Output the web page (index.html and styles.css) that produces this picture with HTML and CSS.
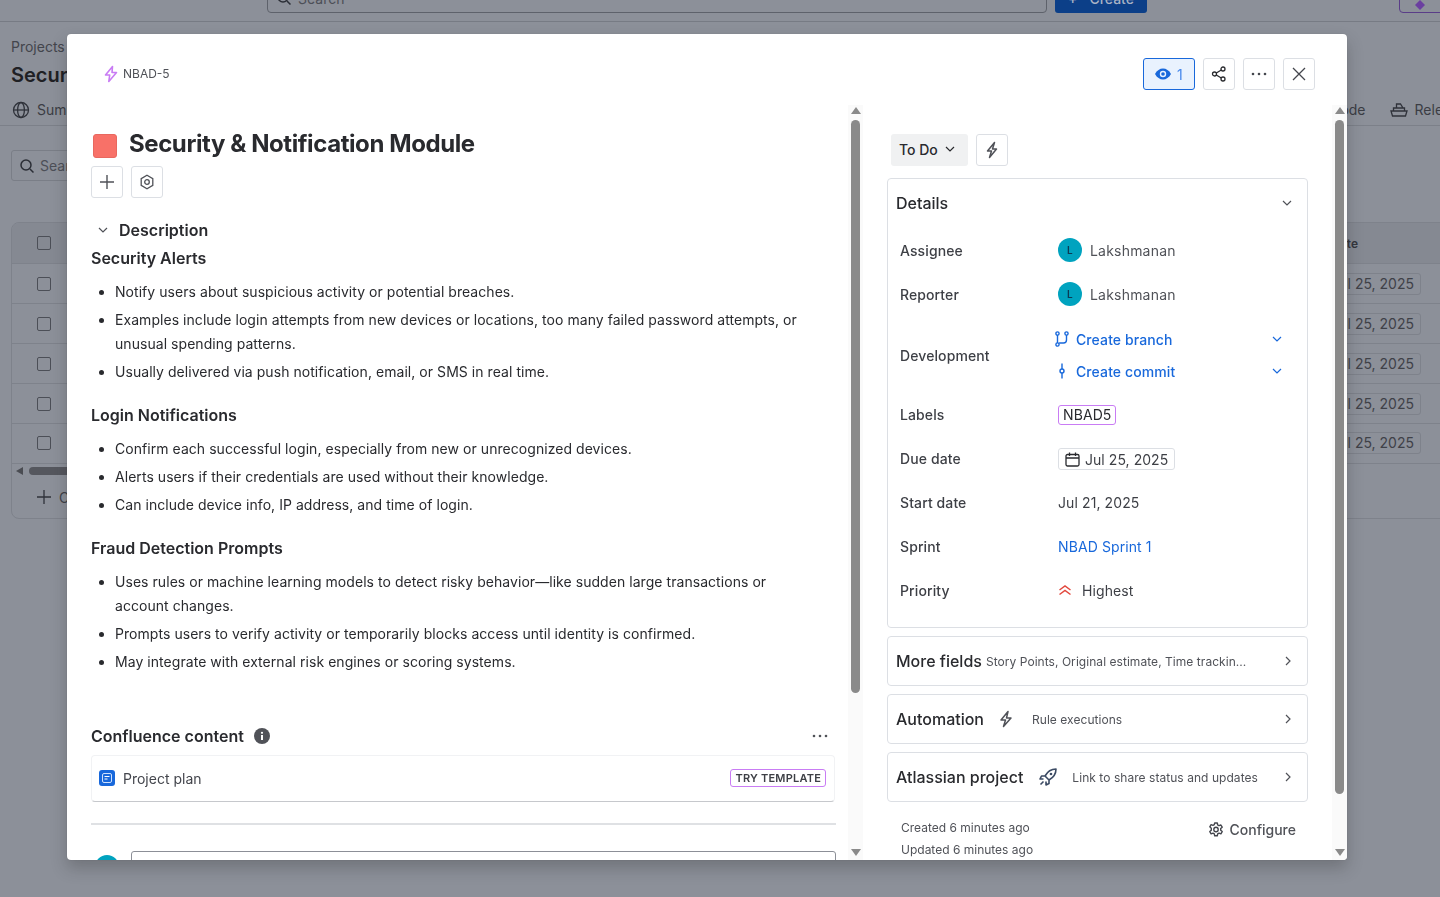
FILE: index.html
```html
<!DOCTYPE html>
<html>
<head>
    <title>Security &amp; Notification Module</title>
    <link rel="stylesheet" href="styles.css">
</head>
<body>
    <!-- Halaman di belakang dialog -->
    <div class="page">
        <div class="topbar">
            <div class="top-search"><svg width="16" height="16" viewBox="0 0 16 16"><circle cx="7" cy="7" r="5" class="ln"/><path d="M11 11l3.5 3.5" class="ln"/></svg>Search</div>
            <div class="top-create"><span class="top-plus">+</span> Create</div>
            <div class="top-upgrade"><svg width="12" height="12" viewBox="0 0 12 12"><path d="M6 1l5 5-5 5-5-5z" fill="#6b3fa0"/></svg></div>
        </div>
        <div class="crumb">Projects</div>
        <div class="page-title">Security &amp; Notification</div>
        <div class="tabs">
            <div class="tab"><svg width="18" height="18" viewBox="0 0 18 18"><circle cx="9" cy="9" r="7.5" class="ln2"/><ellipse cx="9" cy="9" rx="3.4" ry="7.5" class="ln2"/><path d="M1.5 9h15" class="ln2"/></svg>Summary</div>
            <div class="tab-end">
                <div class="tab">Code</div>
                <div class="tab"><svg width="18" height="15" viewBox="0 0 18 15"><path d="M1 9h16l-1.500 5h-13zM3.500 9V6h11v3M6.500 6V2h4l2.500 4" class="ln2"/></svg>Releases</div>
            </div>
        </div>
        <div class="filter"><svg width="16" height="16" viewBox="0 0 16 16"><circle cx="7" cy="7" r="5" class="ln"/><path d="M11 11l3.500 3.500" class="ln"/></svg>Search</div>
        <div class="table">
            <div class="tr tr-head"><span class="check"></span><span>Due date</span></div>
            <div class="tr"><span class="check"></span><span class="cell-date">Jul 25, 2025</span></div>
            <div class="tr"><span class="check"></span><span class="cell-date">Jul 25, 2025</span></div>
            <div class="tr"><span class="check"></span><span class="cell-date">Jul 25, 2025</span></div>
            <div class="tr"><span class="check"></span><span class="cell-date">Jul 25, 2025</span></div>
            <div class="tr tr-last"><span class="check"></span><span class="cell-date">Jul 25, 2025</span></div>
            <div class="hscroll"><span class="hscroll-arrow"></span><span class="hscroll-thumb"></span></div>
            <div class="add-row"><span class="add-plus"><svg width="14" height="14" viewBox="0 0 14 14"><path d="M7 0v14M0 7h14" class="ln2"/></svg></span>Create</div>
        </div>
    </div>

    <!-- Dialog -->
    <div class="modal">
        <div class="modal-head">
            <div class="issue-key">
                <svg width="16" height="18" viewBox="0 0 16 18"><path d="M9.500 1.500L2.500 10h4.200L5.800 16.500 13.500 7.500H9z" fill="none" stroke="#c97cf4" stroke-width="1.600" stroke-linejoin="round"/></svg>
                NBAD-5
            </div>
            <div class="head-actions">
                <button class="icon-btn watch"><svg width="18" height="14" viewBox="0 0 18 14"><path d="M1 7c2-3.600 4.800-5.500 8-5.500S15 3.400 17 7c-2 3.600-4.800 5.500-8 5.500S3 10.600 1 7z" fill="#1868db"/><circle cx="9" cy="7" r="3.200" fill="#e9f2fe"/><circle cx="9" cy="7" r="1.800" fill="#1868db"/></svg><span>1</span></button>
                <button class="icon-btn"><svg width="16" height="16" viewBox="0 0 16 16"><circle cx="3.500" cy="8" r="2" class="ln-d"/><circle cx="12" cy="3" r="2" class="ln-d"/><circle cx="12" cy="13" r="2" class="ln-d"/><path d="M5.300 7l5-3M5.300 9l5 3" class="ln-d"/></svg></button>
                <button class="icon-btn"><svg width="16" height="4" viewBox="0 0 16 4"><circle cx="2" cy="2" r="1.300" fill="#44464d"/><circle cx="8" cy="2" r="1.300" fill="#44464d"/><circle cx="14" cy="2" r="1.300" fill="#44464d"/></svg></button>
                <button class="icon-btn"><svg width="14" height="14" viewBox="0 0 14 14"><path d="M1 1l12 12M13 1L1 13" stroke="#44464d" stroke-width="1.300" fill="none"/></svg></button>
            </div>
        </div>

        <div class="modal-body">
            <div class="col-left">
                <div class="col-scroll">
                    <div class="title-row">
                        <span class="title-swatch"></span>
                        <h1>Security &amp; Notification Module</h1>
                    </div>
                    <div class="title-actions">
                        <button class="icon-btn"><svg width="14" height="14" viewBox="0 0 14 14"><path d="M7 0v14M0 7h14" stroke="#505258" stroke-width="1.400" fill="none"/></svg></button>
                        <button class="icon-btn"><svg width="16" height="16" viewBox="0 0 16 16"><path d="M8 1.300l5.800 3.300v6.800L8 14.700l-5.800-3.300V4.600z" fill="none" stroke="#505258" stroke-width="1.300"/><circle cx="8" cy="8" r="2.300" fill="none" stroke="#505258" stroke-width="1.300"/></svg></button>
                    </div>
                    <div class="desc-head">
                        <svg width="10" height="6" viewBox="0 0 10 6"><path d="M1 1l4 4 4-4" fill="none" stroke="#505258" stroke-width="1.200"/></svg>
                        <h2>Description</h2>
                    </div>
                    <h3 class="first">Security Alerts</h3>
                    <ul>
                        <li>Notify users about suspicious activity or potential breaches.</li>
                        <li>Examples include login attempts from new devices or locations, too many failed password attempts, or unusual spending patterns.</li>
                        <li>Usually delivered via push notification, email, or SMS in real time.</li>
                    </ul>
                    <h3>Login Notifications</h3>
                    <ul>
                        <li>Confirm each successful login, especially from new or unrecognized devices.</li>
                        <li>Alerts users if their credentials are used without their knowledge.</li>
                        <li>Can include device info, IP address, and time of login.</li>
                    </ul>
                    <h3>Fraud Detection Prompts</h3>
                    <ul>
                        <li>Uses rules or machine learning models to detect risky behavior—like sudden large transactions or account changes.</li>
                        <li>Prompts users to verify activity or temporarily blocks access until identity is confirmed.</li>
                        <li>May integrate with external risk engines or scoring systems.</li>
                    </ul>
                    <div class="conf-head">
                        <h3 class="conf-title">Confluence content</h3>
                        <svg width="16" height="16" viewBox="0 0 16 16"><circle cx="8" cy="8" r="8" fill="#505258"/><rect x="7" y="7" width="2" height="5" fill="#fff"/><circle cx="8" cy="4.800" r="1.100" fill="#fff"/></svg>
                        <svg class="conf-more" width="16" height="4" viewBox="0 0 16 4"><circle cx="2" cy="2" r="1.300" fill="#505258"/><circle cx="8" cy="2" r="1.300" fill="#505258"/><circle cx="14" cy="2" r="1.300" fill="#505258"/></svg>
                    </div>
                    <div class="conf-card">
                        <svg width="16" height="16" viewBox="0 0 16 16"><rect width="16" height="16" rx="3" fill="#1868db"/><rect x="3.500" y="3.500" width="9" height="9" rx="1.500" fill="none" stroke="#cfe1fd"/><path d="M5.500 6.500h5M5.500 9h3" stroke="#fff"/></svg>
                        <span class="conf-name">Project plan</span>
                        <span class="try">TRY TEMPLATE</span>
                    </div>
                    <div class="divider"></div>
                    <div class="comment-row">
                        <span class="avatar avatar-lg">L</span>
                        <div class="comment-box"></div>
                    </div>
                </div>
                <div class="sbar">
                    <span class="arrow-up"></span>
                    <span class="thumb thumb-left"></span>
                    <span class="arrow-down"></span>
                </div>
            </div>

            <div class="col-right">
                <div class="col-scroll-r">
                    <div class="status-row">
                        <button class="status">To Do <svg width="10" height="6" viewBox="0 0 10 6"><path d="M1 1l4 4 4-4" fill="none" stroke="#292a2e" stroke-width="1.200"/></svg></button>
                        <button class="icon-btn"><svg width="14" height="18" viewBox="0 0 14 18"><path d="M9.500 1.500L2.500 10h4l-2 6.500L11.500 8h-4z" fill="none" stroke="#505258" stroke-width="1.500" stroke-linejoin="round"/></svg></button>
                    </div>
                    <div class="panel details">
                        <div class="panel-head">
                            <span class="panel-title">Details</span>
                            <svg width="10" height="6" viewBox="0 0 10 6"><path d="M1 1l4 4 4-4" fill="none" stroke="#505258" stroke-width="1.200"/></svg>
                        </div>
                        <div class="row"><span class="row-label">Assignee</span><span class="person"><span class="avatar">L</span>Lakshmanan</span></div>
                        <div class="row"><span class="row-label">Reporter</span><span class="person"><span class="avatar">L</span>Lakshmanan</span></div>
                        <div class="row row-dev">
                            <span class="row-label">Development</span>
                            <div class="dev-links">
                                <div class="dev-link">
                                    <svg width="14" height="16" viewBox="0 0 14 16"><circle cx="2.500" cy="2.500" r="1.600" class="ln-b"/><circle cx="2.500" cy="13.500" r="1.600" class="ln-b"/><circle cx="11.500" cy="2.500" r="1.600" class="ln-b"/><path d="M2.500 4.100v7.800M11.500 4.100V9q0 3-3 3H4.100" class="ln-b"/></svg>
                                    <span>Create branch</span>
                                    <svg class="dev-chev" width="10" height="6" viewBox="0 0 10 6"><path d="M1 1l4 4 4-4" fill="none" stroke="#1868db" stroke-width="1.200"/></svg>
                                </div>
                                <div class="dev-link">
                                    <svg width="14" height="16" viewBox="0 0 14 16"><circle cx="7" cy="8" r="2" class="ln-b"/><path d="M7 0.500V6M7 10v5.500" class="ln-b"/></svg>
                                    <span>Create commit</span>
                                    <svg class="dev-chev" width="10" height="6" viewBox="0 0 10 6"><path d="M1 1l4 4 4-4" fill="none" stroke="#1868db" stroke-width="1.200"/></svg>
                                </div>
                            </div>
                        </div>
                        <div class="row"><span class="row-label">Labels</span><span class="label-tag">NBAD5</span></div>
                        <div class="row"><span class="row-label">Due date</span><span class="date-tag"><svg width="15" height="15" viewBox="0 0 15 15"><rect x="1" y="2.500" width="13" height="11.500" rx="1.500" fill="none" stroke="#292a2e" stroke-width="1.300"/><path d="M1 6h13M4.500 0.500v3.500M10.500 0.500v3.500" stroke="#292a2e" stroke-width="1.300"/></svg>Jul 25, 2025</span></div>
                        <div class="row"><span class="row-label">Start date</span><span>Jul 21, 2025</span></div>
                        <div class="row"><span class="row-label">Sprint</span><span class="link">NBAD Sprint 1</span></div>
                        <div class="row"><span class="row-label">Priority</span><span class="priority"><svg width="14" height="12" viewBox="0 0 14 12"><path d="M1.500 6L7 2l5.500 4M1.500 10.500L7 6.500l5.500 4" fill="none" stroke="#e2483d" stroke-width="1.500"/></svg>Highest</span></div>
                    </div>
                    <div class="panel fold">
                        <span class="panel-title">More fields</span>
                        <span class="fold-sub fold-sub-tight">Story Points, Original estimate, Time trackin...</span>
                        <svg class="fold-chev" width="6" height="10" viewBox="0 0 6 10"><path d="M1 1l4 4-4 4" fill="none" stroke="#505258" stroke-width="1.200"/></svg>
                    </div>
                    <div class="panel fold">
                        <span class="panel-title">Automation</span>
                        <svg class="fold-ic" width="16" height="18" viewBox="0 0 16 18"><path d="M10 1.500L3 10h4.500l-2 6.500L13 8H8.500z" fill="none" stroke="#505258" stroke-width="1.500" stroke-linejoin="round"/></svg>
                        <span class="fold-sub">Rule executions</span>
                        <svg class="fold-chev" width="6" height="10" viewBox="0 0 6 10"><path d="M1 1l4 4-4 4" fill="none" stroke="#505258" stroke-width="1.200"/></svg>
                    </div>
                    <div class="panel fold">
                        <span class="panel-title">Atlassian project</span>
                        <svg class="fold-ic fold-ic-wide" width="18" height="18" viewBox="0 0 18 18"><path d="M17 1C12 1 8.500 3.500 6 8l4 4c4.500-2.500 7-6 7-11zM6 8H2.500L1 11h3.500M10 12v3.500L7 17v-3.500M1.500 16.500L4.500 13.500" fill="none" stroke="#3b4a63" stroke-width="1.600" stroke-linejoin="round"/><circle cx="12" cy="6" r="1.300" fill="#3b4a63"/></svg>
                        <span class="fold-sub">Link to share status and updates</span>
                        <svg class="fold-chev" width="6" height="10" viewBox="0 0 6 10"><path d="M1 1l4 4-4 4" fill="none" stroke="#505258" stroke-width="1.200"/></svg>
                    </div>
                    <div class="meta">
                        <div class="meta-times">
                            <div>Created 6 minutes ago</div>
                            <div>Updated 6 minutes ago</div>
                        </div>
                        <div class="configure"><svg width="16" height="16" viewBox="0 0 16 16"><path d="M6.700 1h2.600l.4 2 1.300.7 1.900-.7 1.300 2.200-1.500 1.400v1.600l1.500 1.400-1.300 2.200-1.900-.7-1.300.7-.4 2H6.700l-.4-2-1.300-.7-1.900.7-1.300-2.200 1.500-1.400V6.200L1.800 4.800 3.100 2.600l1.900.7 1.300-.7z" fill="none" stroke="#44464d" stroke-width="1.400" stroke-linejoin="round"/><circle cx="8" cy="7.500" r="2.200" fill="none" stroke="#44464d" stroke-width="1.400"/></svg>Configure</div>
                    </div>
                </div>
                <div class="sbar">
                    <span class="arrow-up"></span>
                    <span class="thumb thumb-right"></span>
                    <span class="arrow-down"></span>
                </div>
            </div>
        </div>
    </div>
</body>
</html>
```

FILE: styles.css
```css
* {
    box-sizing: border-box;
}
html, body {
    height: 100%;
}
body {
    margin: 0;
    overflow: hidden;
    background-color: #8c9099;
    font-family: Inter, "Liberation Sans", sans-serif;
    font-size: 14px;
    color: #292a2e;
}
button {
    font-family: inherit;
    background: #fff;
    padding: 0;
    cursor: pointer;
}
h1, h2, h3, ul {
    margin: 0;
    padding: 0;
}
.ln {
    fill: none;
    stroke: #2b2e36;
    stroke-width: 1.500;
}
.ln2 {
    fill: none;
    stroke: #2f323a;
    stroke-width: 1.300;
}
.ln-d {
    fill: none;
    stroke: #292a2e;
    stroke-width: 1.300;
}
.ln-b {
    fill: none;
    stroke: #1868db;
    stroke-width: 1.400;
}

/* halaman belakang */
.page {
    height: 100%;
    color: #34363d;
}
.topbar {
    height: 22px;
    border-bottom: 1px solid #777b84;
    display: flex;
    align-items: flex-end;
    padding: 0 0 8px 267px;
}
.top-search {
    width: 780px;
    height: 30px;
    flex-shrink: 0;
    border: 1px solid #5e626b;
    border-radius: 4px;
    display: flex;
    align-items: center;
    gap: 6px;
    padding-left: 8px;
    color: #4c4f57;
}
.top-create {
    width: 92px;
    height: 30px;
    flex-shrink: 0;
    margin-left: 8px;
    background-color: #0c3f88;
    border-radius: 3px;
    display: flex;
    align-items: center;
    justify-content: center;
    color: #a9b3c4;
    font-weight: 500;
}
.top-plus {
    margin-right: 12px;
}
.top-upgrade {
    width: 60px;
    height: 30px;
    flex-shrink: 0;
    margin-left: 252px;
    border: 1px solid #5a3d88;
    border-radius: 4px;
    display: flex;
    align-items: center;
    padding: 14px 0 0 14px;
}
.crumb {
    margin: 16px 0 0 11px;
    line-height: 17px;
    color: #43454c;
}
.page-title {
    margin: 8px 0 0 11px;
    font-size: 20px;
    line-height: 24px;
    font-weight: 600;
    color: #1f2024;
}
.tabs {
    height: 28px;
    margin-top: 11px;
    border-bottom: 1px solid #7c8089;
    display: flex;
    justify-content: space-between;
    padding: 0 0 4px 12px;
    align-items: center;
}
.tab {
    display: flex;
    align-items: center;
    gap: 7px;
    color: #3b3d44;
}
.tab-end {
    display: flex;
    gap: 24px;
    margin-right: -34px;
}
.filter {
    width: 200px;
    height: 31px;
    margin: 24px 0 0 11px;
    border: 1px solid #7a7e87;
    border-radius: 3px;
    display: flex;
    align-items: center;
    gap: 5px;
    padding-left: 7px;
    color: #4c4f57;
}
.table {
    height: 297px;
    margin: 41px -12px 0 11px;
    border: 1px solid #7e828b;
    border-radius: 8px;
    overflow: hidden;
}
.tr {
    height: 40px;
    display: flex;
    align-items: center;
    justify-content: space-between;
    padding: 0 30px 0 25px;
    border-bottom: 1px solid #7e828b;
}
.tr-head {
    height: 41px;
    background-color: #858992;
    font-size: 12px;
    font-weight: 600;
    padding-right: 93px;
}
.tr-last {
    height: 39px;
    padding-bottom: 2px;
    border-bottom: 0;
}
.check {
    width: 14px;
    height: 14px;
    border: 1px solid #4c4f57;
    border-radius: 2px;
}
.cell-date {
    height: 22px;
    line-height: 20px;
    padding: 0 6px;
    border: 1px solid #7e828b;
    border-radius: 3px;
    color: #3f4148;
}
.hscroll {
    height: 14px;
    display: flex;
    align-items: center;
    gap: 6px;
    padding-left: 4px;
    border-top: 1px solid #7e828b;
}
.hscroll-arrow {
    border-style: solid;
    border-width: 4px 7px 4px 0;
    border-color: transparent #4a4c52 transparent transparent;
}
.hscroll-thumb {
    width: 120px;
    height: 8px;
    border-radius: 4px;
    background-color: #55575e;
}
.add-row {
    height: 40px;
    display: flex;
    align-items: center;
    gap: 8px;
    padding-left: 25px;
    color: #3f4148;
}
.add-plus {
    display: flex;
}

/* dialog */
.modal {
    position: fixed;
    left: 67px;
    top: 34px;
    width: 1280px;
    height: 826px;
    background-color: #fff;
    border-radius: 4px;
    box-shadow: 0 8px 16px rgba(30, 31, 33, 0.25), 0 0 1px rgba(30, 31, 33, 0.3);
    display: flex;
    flex-direction: column;
    overflow: hidden;
}
.modal-head {
    height: 71px;
    flex-shrink: 0;
    display: flex;
    align-items: flex-start;
    justify-content: space-between;
    padding: 24px 32px 0 36px;
}
.issue-key {
    height: 31px;
    display: flex;
    align-items: center;
    gap: 4px;
    font-size: 12px;
    color: #505258;
}
.head-actions {
    display: flex;
    gap: 8px;
}
.icon-btn {
    width: 32px;
    height: 32px;
    border: 1px solid #dcdfe4;
    border-radius: 3px;
    display: flex;
    align-items: center;
    justify-content: center;
}
.watch {
    width: 52px;
    justify-content: flex-start;
    padding-left: 10px;
    gap: 5px;
    background-color: #e9f2fe;
    border-color: #1868db;
    color: #4688ec;
    font-size: 14px;
}
.modal-body {
    flex: 1;
    min-height: 0;
    display: flex;
}
.col-left {
    width: 796px;
    display: flex;
}
.col-right {
    flex: 1;
    min-width: 0;
    display: flex;
}
.col-scroll {
    flex: 1;
    min-width: 0;
    overflow: hidden;
    padding: 29px 12px 0 24px;
}
.col-scroll-r {
    flex: 1;
    min-width: 0;
    overflow: hidden;
    padding: 29px 24px 0 24px;
}

/* scrollbar */
.sbar {
    width: 15px;
    flex-shrink: 0;
    background-color: #fafafa;
    display: flex;
    flex-direction: column;
    align-items: center;
}
.arrow-up {
    margin-top: 2px;
    border-style: solid;
    border-width: 0 5px 7px 5px;
    border-color: transparent transparent #8a8a8a transparent;
}
.arrow-down {
    margin-top: auto;
    margin-bottom: 4px;
    border-style: solid;
    border-width: 7px 5px 0 5px;
    border-color: #8a8a8a transparent transparent transparent;
}
.thumb {
    width: 9px;
    margin-top: 6px;
    background-color: #8a8a8a;
    border-radius: 5px;
}
.thumb-left {
    height: 573px;
}
.thumb-right {
    height: 674px;
}

/* kolom kiri */
.title-row {
    display: flex;
    align-items: flex-start;
    gap: 12px;
    height: 32px;
    padding-left: 2px;
}
.title-swatch {
    width: 24px;
    height: 24px;
    background-color: #f87168;
    border: 1px solid #e8685f;
    border-radius: 3px;
}
h1 {
    font-size: 24px;
    line-height: 24px;
    font-weight: 650;
    letter-spacing: -0.42px;
    margin-top: -2px;
    color: #292a2e;
}
.title-actions {
    display: flex;
    gap: 8px;
}
.desc-head {
    display: flex;
    align-items: center;
    gap: 11px;
    margin-top: 16px;
    padding-left: 7px;
    height: 32px;
}
h2 {
    font-size: 16px;
    line-height: 20px;
    font-weight: 600;
}
h3 {
    font-size: 16px;
    line-height: 20px;
    font-weight: 600;
    margin-top: 21px;
}
h3.first {
    margin-top: 2px;
}
ul {
    padding: 0 20px 0 24px;
    margin-top: 12px;
}
li {
    line-height: 24px;
    margin-top: 4px;
    letter-spacing: 0.05px;
    color: #292a2e;
}
.conf-head {
    display: flex;
    align-items: center;
    gap: 10px;
    height: 20px;
    margin-top: 52px;
}
.conf-title {
    margin-top: 0;
}
.conf-more {
    margin-left: auto;
    margin-right: 8px;
}
.conf-card {
    height: 47px;
    margin-top: 9px;
    border: 1px solid #f1f2f4;
    border-bottom-color: #c6c8cc;
    border-radius: 4px;
    display: flex;
    align-items: center;
    gap: 8px;
    padding: 0 8px 1px 7px;
    width: 744px;
}
.conf-name {
    color: #44464d;
}
.try {
    margin-left: auto;
    height: 18px;
    border: 1px solid #c97cf4;
    border-radius: 3px;
    font-size: 11px;
    font-weight: 600;
    line-height: 16px;
    letter-spacing: 0.2px;
    padding: 0 4px;
    color: #3d3f45;
}
.divider {
    height: 2px;
    background-color: #dfe1e4;
    margin-top: 21px;
    width: 745px;
}
.comment-row {
    display: flex;
    gap: 12px;
    margin-top: 26px;
    width: 745px;
}
.comment-box {
    flex: 1;
    height: 60px;
    border: 1px solid #8c8f97;
    border-radius: 3px;
}

/* kolom kanan */
.status-row {
    display: flex;
    gap: 8px;
    padding-left: 4px;
}
.status {
    width: 77px;
    height: 32px;
    border: 0;
    background-color: #f0f1f2;
    border-radius: 3px;
    font-size: 14px;
    font-weight: 500;
    color: #292a2e;
    display: flex;
    align-items: center;
    padding: 0 0 2px 8px;
    gap: 7px;
}
.panel {
    width: 421px;
    border: 1px solid #dcdfe4;
    border-radius: 4px;
}
.details {
    height: 450px;
    margin-top: 12px;
    padding: 0 15px 0 12px;
}
.panel-head {
    height: 47px;
    margin: 0 0 2px -4px;
    display: flex;
    align-items: center;
    justify-content: space-between;
}
.panel-title {
    font-size: 16px;
    font-weight: 500;
    color: #292a2e;
    white-space: nowrap;
}
.row {
    height: 44px;
    display: grid;
    grid-template-columns: 158px 1fr;
    align-items: center;
    letter-spacing: 0.1px;
    color: #3d3f45;
}
.row-label {
    font-weight: 500;
    color: #3d3f45;
}
.row-dev {
    height: 76px;
    padding-top: 2px;
}
.person {
    display: flex;
    align-items: center;
    gap: 8px;
    letter-spacing: 0.2px;
    color: #505258;
}
.avatar {
    width: 24px;
    height: 24px;
    border-radius: 50%;
    background-color: #00a3bf;
    color: #0b3b55;
    font-size: 10px;
    font-weight: 600;
    display: flex;
    align-items: center;
    justify-content: center;
    flex-shrink: 0;
}
.avatar-lg {
    margin: 4px 0 0 4px;
}
.dev-links {
    margin-left: -3px;
}
.dev-link {
    height: 32px;
    display: flex;
    align-items: center;
    gap: 7px;
    color: #1868db;
    font-weight: 500;
}
.dev-chev {
    margin-left: auto;
    margin-right: 10px;
}
.label-tag {
    justify-self: start;
    height: 20px;
    margin-top: 2px;
    border: 1px solid #c97cf4;
    border-radius: 3px;
    padding: 0 4px;
    line-height: 18px;
    color: #292a2e;
}
.date-tag {
    justify-self: start;
    height: 22px;
    margin-top: 2px;
    border: 1px solid #dcdfe4;
    border-radius: 3px;
    padding: 0 6px;
    display: flex;
    align-items: center;
    gap: 5px;
    letter-spacing: 0.05px;
    color: #3d3f45;
}
.link {
    color: #1868db;
}
.priority {
    display: flex;
    align-items: center;
    gap: 10px;
    color: #3d3f45;
}
.fold {
    height: 50px;
    margin-top: 8px;
    display: flex;
    align-items: center;
    padding: 0 16px 0 8px;
}
.fold-sub {
    font-size: 12px;
    letter-spacing: 0.05px;
    color: #505258;
    white-space: nowrap;
}
.fold-sub-tight {
    margin-left: 4px;
}
.fold-ic {
    margin: 0 18px 0 14px;
    flex-shrink: 0;
}
.fold-ic-wide {
    margin: 0 15px 0 16px;
}
.fold-chev {
    margin-left: auto;
}
.meta {
    display: flex;
    justify-content: space-between;
    align-items: flex-start;
    width: 421px;
    padding: 15px 12px 0 14px;
    font-size: 12px;
    color: #505258;
}
.meta-times div {
    line-height: 22px;
}
.configure {
    display: flex;
    align-items: center;
    gap: 6px;
    font-size: 14px;
    font-weight: 500;
    margin-top: 4px;
}
```
